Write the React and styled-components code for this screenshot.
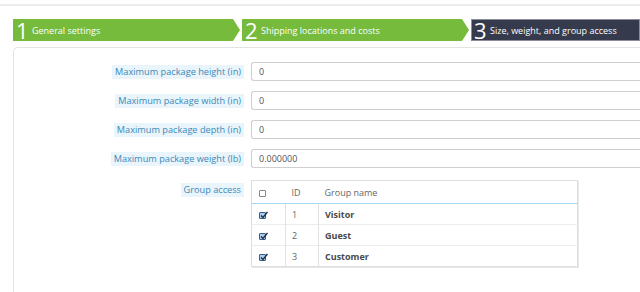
import React from 'react';
import styled, { createGlobalStyle } from 'styled-components';

const GlobalStyle = createGlobalStyle`
  html, body {
    margin: 0;
    padding: 0;
    background: #fff;
    font-family: "Open Sans", "Liberation Sans", sans-serif;
    overflow: hidden;
  }
`;

const Page = styled.div`
  width: 640px;
  height: 292px;
  overflow: hidden;
`;

const TopRule = styled.div`
  height: 4px;
  border-bottom: 2px solid #ececec;
`;

const Steps = styled.div`
  display: flex;
  margin: 13px 0 0 13px;
  height: 22px;
`;

const Step = styled.div`
  display: flex;
  align-items: center;
  box-sizing: border-box;
  flex: ${(p) => (p.$last ? '1' : '0 0 227px')};
  margin-right: ${(p) => (p.$last ? '0' : '2px')};
  padding-left: 3px;
  background: ${(p) => (p.$active ? '#363a4d' : '#76bb3b')};
  color: #fff;
  clip-path: ${(p) =>
    p.$last
      ? 'none'
      : 'polygon(0 0, calc(100% - 7px) 0, 100% 50%, calc(100% - 7px) 100%, 0 100%)'};
  box-shadow: ${(p) => (p.$active ? 'inset 0 0 0 1px #8a8e9a' : 'none')};
`;

const StepNum = styled.span`
  font-size: 22px;
  font-weight: 400;
  line-height: 22px;
  width: 15px;
  margin-right: 1px;
`;

const StepLabel = styled.span`
  font-size: 9px;
  font-weight: 500;
  white-space: nowrap;
`;

const Panel = styled.div`
  margin: 6px 0 0 13px;
  height: 260px;
  border: 1px solid #e3e3e3;
  border-right: none;
  border-radius: 5px 0 0 0;
  padding-top: 14px;
  box-sizing: border-box;
`;

const Row = styled.div`
  display: grid;
  grid-template-columns: 230px 1fr;
  column-gap: 7px;
  align-items: ${(p) => (p.$top ? 'start' : 'center')};
  margin-bottom: ${(p) => (p.$gap || 10)}px;
`;

const LabelCell = styled.div`
  display: flex;
  justify-content: flex-end;
  padding-top: ${(p) => (p.$top ? '3px' : '0')};
`;

const Label = styled.span`
  background: #e9f4fb;
  color: #3a8ab8;
  font-size: 9.2px;
  line-height: 14px;
  padding: 0 3px;
  white-space: nowrap;
`;

const Input = styled.div`
  height: 19px;
  box-sizing: border-box;
  border: 1px solid #cfcfcf;
  border-right: none;
  border-radius: 3px 0 0 3px;
  padding-left: 7px;
  font-size: 9px;
  line-height: 17px;
  color: #555;
`;

const Table = styled.table`
  width: 327px;
  table-layout: fixed;
  border-collapse: collapse;
  border: 1px solid #dedede;
  box-shadow: 1px 1px 0 #e8e8e8;
  font-size: 9px;
  color: #555;
`;

const Th = styled.th`
  height: 22px;
  text-align: left;
  font-weight: 400;
  color: #666;
  padding: 0 0 0 ${(p) => p.$pad || 6}px;
  border-bottom: 1px solid #a9d8f2;
`;

const Td = styled.td`
  height: 20px;
  padding: 0 0 0 ${(p) => p.$pad || 6}px;
  border-top: 1px solid #ececec;
  border-left: ${(p) => (p.$first ? 'none' : '1px solid #e2e2e2')};
  font-weight: ${(p) => (p.$bold ? 700 : 400)};
  color: ${(p) => (p.$bold ? '#4a4a4a' : '#666')};
`;

const Box = styled.span`
  display: inline-block;
  width: 7px;
  height: 7px;
  box-sizing: border-box;
  border: 1px solid ${(p) => (p.$checked ? '#3b5f86' : '#888')};
  border-radius: 1px;
  background: ${(p) => (p.$checked ? '#a8cbed' : '#fff')};
  position: relative;
  vertical-align: middle;
`;

const Tick = styled.svg`
  position: absolute;
  left: 0;
  top: -2px;
  width: 8px;
  height: 8px;
`;

const Checkbox = ({ checked }) => (
  <Box $checked={checked}>
    {checked && (
      <Tick viewBox="0 0 8 8">
        <path d="M1 4.5 L3 6.5 L7.5 1" fill="none" stroke="#1d2f45" strokeWidth="1.4" />
      </Tick>
    )}
  </Box>
);

const fields = [
  ['Maximum package height (in)', '0'],
  ['Maximum package width (in)', '0'],
  ['Maximum package depth (in)', '0'],
  ['Maximum package weight (lb)', '0.000000'],
];

const groups = [
  [1, 'Visitor'],
  [2, 'Guest'],
  [3, 'Customer'],
];

export default function App() {
  return (
    <Page>
      <GlobalStyle />
      <TopRule />
      <Steps>
        <Step>
          <StepNum>1</StepNum>
          <StepLabel>General settings</StepLabel>
        </Step>
        <Step>
          <StepNum>2</StepNum>
          <StepLabel>Shipping locations and costs</StepLabel>
        </Step>
        <Step $active $last>
          <StepNum>3</StepNum>
          <StepLabel>Size, weight, and group access</StepLabel>
        </Step>
      </Steps>
      <Panel>
        {fields.map(([label, value], i) => (
          <Row key={label} $gap={i === fields.length - 1 ? 12 : 10}>
            <LabelCell>
              <Label>{label}</Label>
            </LabelCell>
            <Input>{value}</Input>
          </Row>
        ))}
        <Row $top>
          <LabelCell $top>
            <Label>Group access</Label>
          </LabelCell>
          <div>
            <Table>
              <colgroup>
                <col style={{ width: 34 }} />
                <col style={{ width: 33 }} />
                <col />
              </colgroup>
              <thead>
                <tr>
                  <Th $pad={7}>
                    <Checkbox />
                  </Th>
                  <Th>ID</Th>
                  <Th>Group name</Th>
                </tr>
              </thead>
              <tbody>
                {groups.map(([id, name]) => (
                  <tr key={id}>
                    <Td $first $pad={7}>
                      <Checkbox checked />
                    </Td>
                    <Td>{id}</Td>
                    <Td $bold>{name}</Td>
                  </tr>
                ))}
              </tbody>
            </Table>
          </div>
        </Row>
      </Panel>
    </Page>
  );
}
